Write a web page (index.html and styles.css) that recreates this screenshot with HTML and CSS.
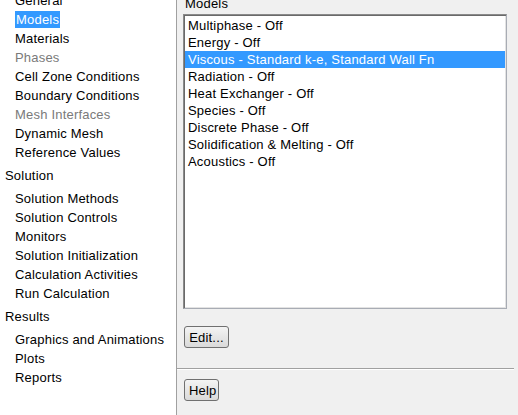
FILE: index.html
```html
<!DOCTYPE html>
<html lang="en">
<head>
    <meta charset="UTF-8">
    <title>Models</title>
    <link rel="stylesheet" href="styles.css">
</head>
<body>

    <div class="window">
        <!-- navigation tree -->
        <div class="nav">
            <ul class="tree">
                <li class="item">General</li>
                <li class="item"><span class="selected">Models</span></li>
                <li class="item">Materials</li>
                <li class="item disabled">Phases</li>
                <li class="item">Cell Zone Conditions</li>
                <li class="item">Boundary Conditions</li>
                <li class="item disabled">Mesh Interfaces</li>
                <li class="item">Dynamic Mesh</li>
                <li class="item">Reference Values</li>
                <li class="group">Solution</li>
                <li class="item">Solution Methods</li>
                <li class="item">Solution Controls</li>
                <li class="item">Monitors</li>
                <li class="item">Solution Initialization</li>
                <li class="item">Calculation Activities</li>
                <li class="item">Run Calculation</li>
                <li class="group">Results</li>
                <li class="item">Graphics and Animations</li>
                <li class="item">Plots</li>
                <li class="item">Reports</li>
            </ul>
        </div>

        <!-- task page -->
        <div class="panel">
            <div class="label">Models</div>
            <ul class="listbox">
                <li>Multiphase - Off</li>
                <li>Energy - Off</li>
                <li class="active">Viscous - Standard k-e, Standard Wall Fn</li>
                <li>Radiation - Off</li>
                <li>Heat Exchanger - Off</li>
                <li>Species - Off</li>
                <li>Discrete Phase - Off</li>
                <li>Solidification &amp; Melting - Off</li>
                <li>Acoustics - Off</li>
            </ul>
            <div class="actions">
                <button class="btn edit">Edit...</button>
            </div>
            <div class="separator"></div>
            <div class="actions">
                <button class="btn help">Help</button>
            </div>
        </div>
    </div>

</body>
</html>
```

FILE: styles.css
```css
/* General */
body {
    margin: 0;
    font-family: "Liberation Sans", Arial, sans-serif;
    font-size: 13px;
    letter-spacing: 0.2px;
    color: #000;
    background: #f0f0f0;
    overflow: hidden;
}

.window {
    display: flex;
    height: 415px;
}

/* Navigation tree */
.nav {
    width: 176px;
    background: #fff;
    border-right: 1px solid #a0a0a0;
    overflow: hidden;
}

.tree {
    list-style: none;
    margin: -9px 0 0 0;
    padding: 0;
}

.tree li {
    height: 19px;
    line-height: 19px;
    white-space: nowrap;
}

.item {
    padding-left: 15px;
}

.group {
    padding-left: 5px;
    margin: 4px 0;
}

.disabled {
    color: #7a7a7a;
}

.selected {
    background: #3399ff;
    color: #fff;
    padding: 1px 1px;
}

/* Task page */
.panel {
    flex: 1;
    display: flex;
    flex-direction: column;
}

.label {
    line-height: 15px;
    margin: -4px 0 0 8px;
}

.listbox {
    list-style: none;
    width: 322px;
    height: 291px;
    margin: 3px 0 0 6px;
    padding: 2px 0 0 0;
    background: #fff;
    border: 1px solid #8a8a8a;
    border-right-color: #a8acb4;
    border-bottom-color: #a8acb4;
    box-shadow: inset 1px 1px 0 #6a6a6a, inset -1px -1px 0 #e3e3e3;
}

.listbox li {
    height: 17px;
    line-height: 17px;
    margin: 0 1px;
    padding-left: 3px;
    white-space: nowrap;
}

.listbox .active {
    background: #3399ff;
    color: #fff;
}

/* Buttons */
.actions {
    padding-left: 7px;
}

.btn {
    font-family: inherit;
    font-size: 13px;
    letter-spacing: 0.2px;
    height: 22px;
    padding: 0 4px;
    color: #000;
    background: linear-gradient(#f4f4f4, #e6e6e6 50%, #dadada);
    border: 1px solid #707070;
    border-radius: 3px;
}

.edit {
    width: 45px;
    margin-top: 17px;
}

.help {
    width: 35px;
    margin-top: 9px;
}

.separator {
    margin: 20px 4px 0 0;
    border-top: 1px solid #a0a0a0;
    border-bottom: 1px solid #fff;
}
```
